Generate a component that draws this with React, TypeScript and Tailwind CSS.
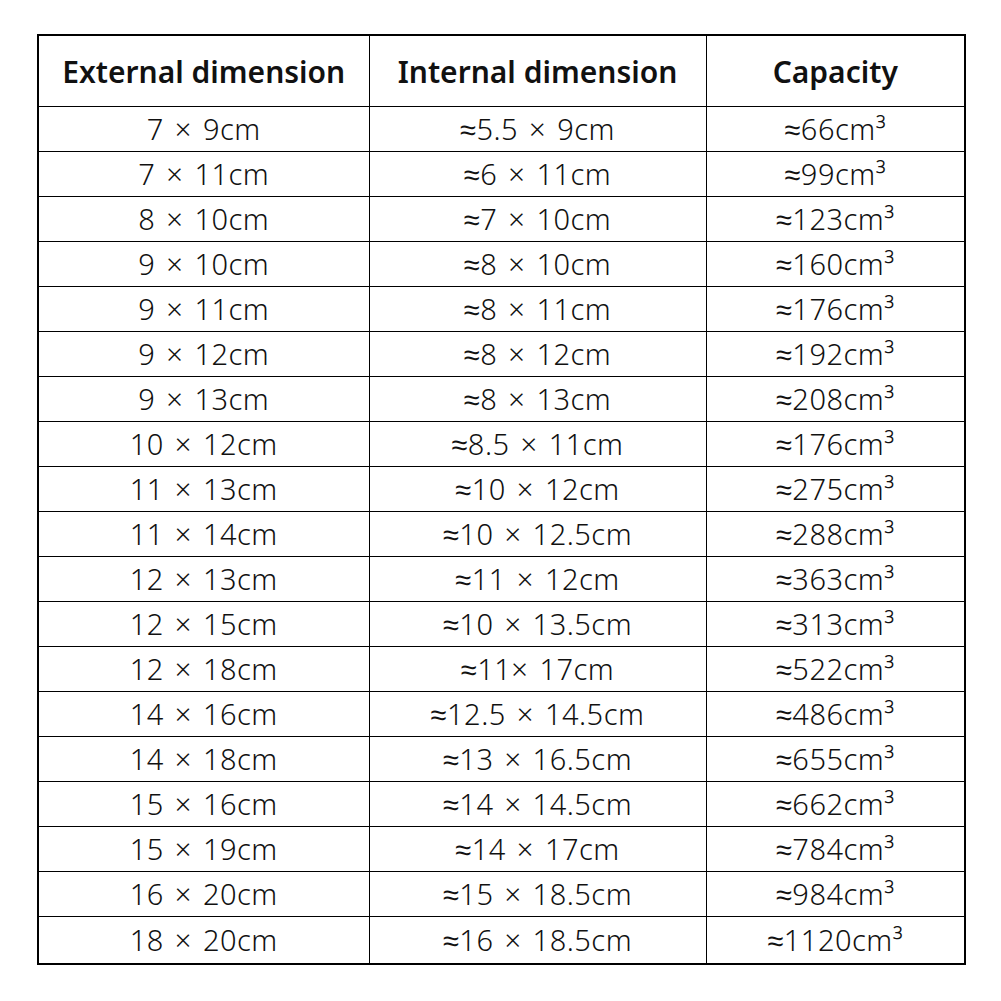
const rows: [string, string, string][] = [
  ["7 × 9cm", "≈5.5 × 9cm", "≈66cm³"],
  ["7 × 11cm", "≈6 × 11cm", "≈99cm³"],
  ["8 × 10cm", "≈7 × 10cm", "≈123cm³"],
  ["9 × 10cm", "≈8 × 10cm", "≈160cm³"],
  ["9 × 11cm", "≈8 × 11cm", "≈176cm³"],
  ["9 × 12cm", "≈8 × 12cm", "≈192cm³"],
  ["9 × 13cm", "≈8 × 13cm", "≈208cm³"],
  ["10 × 12cm", "≈8.5 × 11cm", "≈176cm³"],
  ["11 × 13cm", "≈10 × 12cm", "≈275cm³"],
  ["11 × 14cm", "≈10 × 12.5cm", "≈288cm³"],
  ["12 × 13cm", "≈11 × 12cm", "≈363cm³"],
  ["12 × 15cm", "≈10 × 13.5cm", "≈313cm³"],
  ["12 × 18cm", "≈11× 17cm", "≈522cm³"],
  ["14 × 16cm", "≈12.5 × 14.5cm", "≈486cm³"],
  ["14 × 18cm", "≈13 × 16.5cm", "≈655cm³"],
  ["15 × 16cm", "≈14 × 14.5cm", "≈662cm³"],
  ["15 × 19cm", "≈14 × 17cm", "≈784cm³"],
  ["16 × 20cm", "≈15 × 18.5cm", "≈984cm³"],
  ["18 × 20cm", "≈16 × 18.5cm", "≈1120cm³"],
]

export default function App() {
  return (
    <div className="w-[1001px] h-[1001px] bg-white pt-[34px] pl-[37px] font-['Noto_Sans',sans-serif] text-[#111]">
      <table className="w-[927px] border-collapse border-2 border-black table-fixed">
        <colgroup>
          <col className="w-[331px]" />
          <col className="w-[337px]" />
          <col className="w-[259px]" />
        </colgroup>
        <thead>
          <tr className="h-[71px]">
            <th className="border border-black text-[30px] font-semibold text-center leading-none pt-0.5">External dimension</th>
            <th className="border border-black text-[30px] font-semibold text-center leading-none pt-0.5">Internal dimension</th>
            <th className="border border-black text-[30px] font-semibold text-center leading-none pt-0.5">Capacity</th>
          </tr>
        </thead>
        <tbody>
          {rows.map((r, i) => (
            <tr key={i} className={i === rows.length - 1 ? "h-[48px]" : "h-[45px]"}>
              {r.map((c, j) => (
                <td key={j} className="border border-black text-[29px] font-light text-center leading-none p-0 tracking-[0.5px] [word-spacing:3px]">
                  {c}
                </td>
              ))}
            </tr>
          ))}
        </tbody>
      </table>
    </div>
  )
}
